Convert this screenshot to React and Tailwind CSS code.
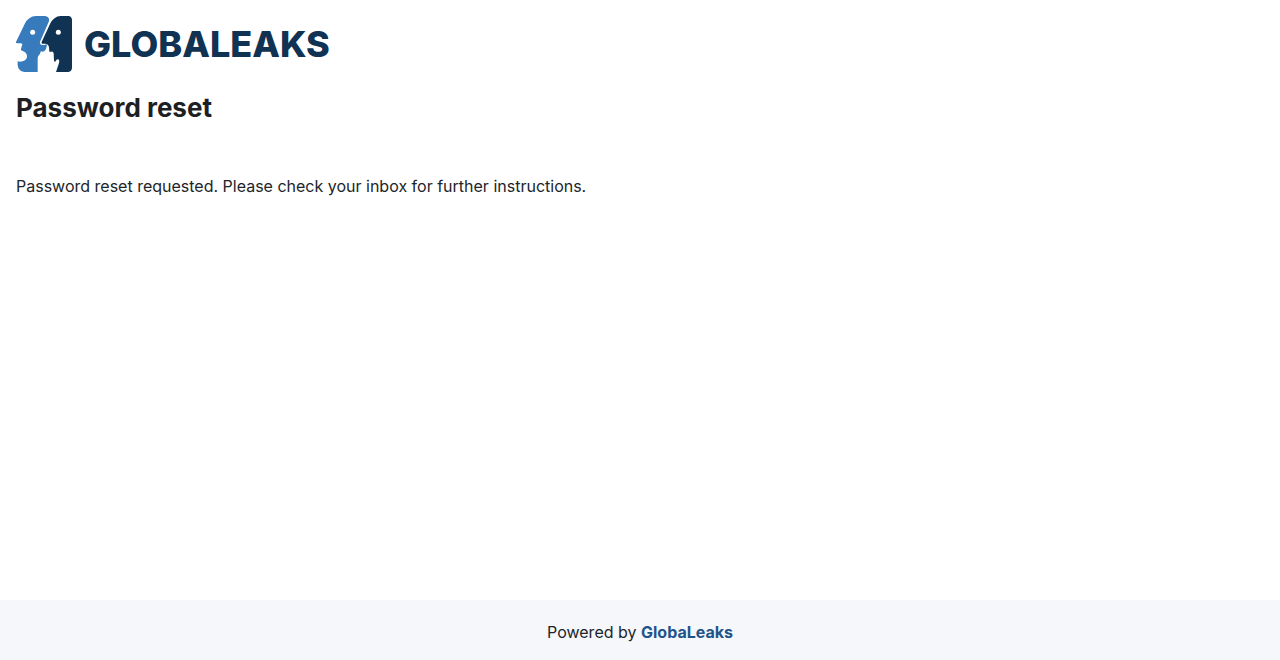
function BrandMark() {
  return (
    <svg viewBox="24 24 168 168" className="size-14 shrink-0" aria-hidden="true">
      <path
        fill="#377bbc"
        d="M24 102 L50 48 Q61 25 84 24 H111 Q127 27 122 42 L96 101 Q94 109 102 111 H110 L114 109 L117 111 L114 123 Q111 130 105 131 L99 130 Q97 133 96 137 Q90 143 89 150 V192 H49 Q31 190 29 171 V160 Q36 162 44 160 Q58 155 57 143 Q55 131 42 128 Q38 127 39 123 L43 109 Q42 106 38 106 H27 Q23 106 24 102 Z"
      />
      <path
        fill="#103253"
        d="M101 102 L126 48 Q137 25 158 24 H181 Q191 25 192 35 V180 Q191 191 181 192 H144 L153 165 Q156 157 151 154 Q145 152 141 162 L138 159 L137 136 Q135 129 130 131 L124 131 L123 116 Q121 108 113 107 H103 Q99 106 101 102 Z"
      />
      <circle cx="74" cy="73" r="7.5" fill="#fff" />
      <circle cx="151" cy="73" r="7.5" fill="#fff" />
    </svg>
  );
}

export default function App() {
  return (
    <div className="flex min-h-screen flex-col bg-white font-['Inter',sans-serif] text-base text-[#212529]">
      <header className="px-4 pt-4">
        <a href="#" aria-label="GlobaLeaks" className="inline-flex h-14 items-center gap-3 align-top">
          <BrandMark />
          <span className="text-4xl leading-none font-extrabold text-[#103253]">GLOBALEAKS</span>
        </a>
        <h1 className="mt-4 text-[26px] leading-10 font-bold text-[#1d1f23]">Password reset</h1>
      </header>
      <main className="grow px-4 pt-[46px]">
        <p className="leading-6">
          Password reset requested. Please check your inbox for further instructions.
        </p>
      </main>
      <footer className="bg-[#f5f7fb] px-4 pt-5 pb-4 text-center leading-6">
        Powered by{" "}
        <a href="#" className="font-bold text-[#1f5489]">
          GlobaLeaks
        </a>
      </footer>
    </div>
  );
}
